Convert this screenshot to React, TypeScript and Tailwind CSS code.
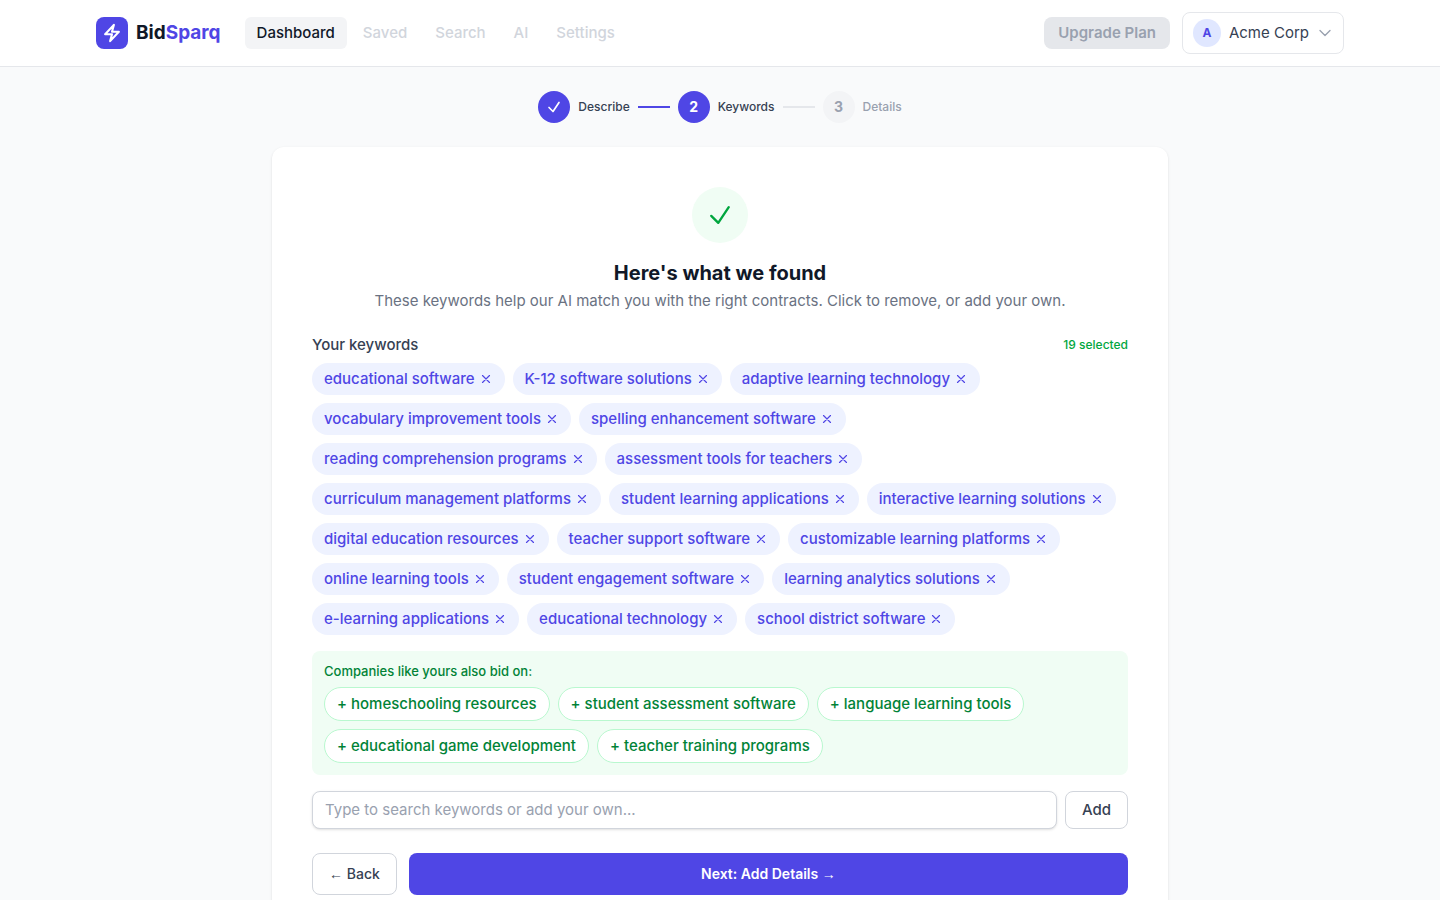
import React from "react";
import {
  HiOutlineBolt,
  HiOutlineCheck,
  HiOutlineChevronDown,
  HiOutlineXMark,
} from "react-icons/hi2";

const navItems = ["Saved", "Search", "AI", "Settings"];

const keywords = [
  "educational software",
  "K-12 software solutions",
  "adaptive learning technology",
  "vocabulary improvement tools",
  "spelling enhancement software",
  "reading comprehension programs",
  "assessment tools for teachers",
  "curriculum management platforms",
  "student learning applications",
  "interactive learning solutions",
  "digital education resources",
  "teacher support software",
  "customizable learning platforms",
  "online learning tools",
  "student engagement software",
  "learning analytics solutions",
  "e-learning applications",
  "educational technology",
  "school district software",
];

const suggestions = [
  "homeschooling resources",
  "student assessment software",
  "language learning tools",
  "educational game development",
  "teacher training programs",
];

const Header = () => {
  return (
    <header className="bg-white border-b border-gray-200">
      <div className="max-w-7xl mx-auto px-4 py-3 flex items-center justify-between">
        <div className="flex items-center gap-6">
          <a href="#" className="flex items-center gap-2">
            <span className="size-8 rounded-lg bg-[#4f46e5] text-white flex items-center justify-center">
              <HiOutlineBolt size={20} className="[stroke-width:2.5]" />
            </span>
            <span className="text-[19px]/7 font-bold text-gray-900">
              Bid<span className="text-[#4f46e5]">Sparq</span>
            </span>
          </a>
          <nav className="flex items-center gap-1">
            <a href="#" className="px-3 py-1.5 rounded-md bg-gray-100 text-[15px]/5 font-medium text-gray-900">
              Dashboard
            </a>
            {navItems.map((item) => (
              <a key={item} href="#" className="px-3 py-1.5 rounded-md text-[15px]/5 font-medium text-gray-300">
                {item}
              </a>
            ))}
          </nav>
        </div>

        <div className="flex items-center gap-3">
          <button type="button" disabled className="px-3.5 py-1.5 rounded-lg bg-gray-200 text-[15px]/5 font-semibold text-gray-400">
            Upgrade Plan
          </button>
          <button type="button" className="flex items-center gap-2 px-2.5 py-1.5 rounded-lg border border-gray-200 bg-white">
            <span className="size-7 rounded-full bg-indigo-100 text-[#4f46e5] text-xs font-bold flex items-center justify-center">
              A
            </span>
            <span className="text-[15px]/5 text-gray-700">Acme Corp</span>
            <HiOutlineChevronDown size={16} className="text-gray-400 [stroke-width:2]" />
          </button>
        </div>
      </div>
    </header>
  );
};

const Steps = () => {
  return (
    <ol className="flex items-center justify-center gap-2 text-xs font-medium">
      <li className="flex items-center gap-2 text-gray-700">
        <span className="size-8 rounded-full bg-[#4f46e5] text-white flex items-center justify-center">
          <HiOutlineCheck size={16} className="[stroke-width:2.5]" />
        </span>
        Describe
        <span className="w-8 h-0.5 bg-[#4f46e5]" />
      </li>
      <li className="flex items-center gap-2 text-gray-700">
        <span className="size-8 rounded-full bg-[#4f46e5] text-white text-sm font-bold flex items-center justify-center">
          2
        </span>
        Keywords
        <span className="w-8 h-0.5 bg-gray-200" />
      </li>
      <li className="flex items-center gap-2 text-gray-400">
        <span className="size-8 rounded-full bg-gray-100 text-sm font-bold flex items-center justify-center">
          3
        </span>
        Details
      </li>
    </ol>
  );
};

const App = () => {
  return (
    <div className="min-h-screen bg-gray-50 font-[Inter,sans-serif]">
      <Header />

      <main className="max-w-4xl mx-auto py-6">
        <Steps />

        <section className="mt-6 p-10 bg-white rounded-xl shadow-sm">
          <div className="text-center">
            <div className="size-14 mx-auto rounded-full bg-green-50 text-green-600 flex items-center justify-center">
              <HiOutlineCheck size={28} className="[stroke-width:2]" />
            </div>
            <h1 className="mt-4 text-xl font-bold text-gray-900">Here's what we found</h1>
            <p className="mt-1 text-[15px]/5 text-gray-500">
              These keywords help our AI match you with the right contracts. Click to remove, or add your own.
            </p>
          </div>

          <div className="mt-6 mb-2 flex items-center justify-between">
            <h2 className="text-[15px]/5 font-medium text-gray-700">Your keywords</h2>
            <span className="text-xs font-medium text-green-600">{keywords.length} selected</span>
          </div>
          <div className="flex flex-wrap gap-2">
            {keywords.map((keyword) => (
              <button
                key={keyword}
                type="button"
                className="flex items-center gap-1 px-3 py-1.5 rounded-full bg-indigo-50 text-[15px]/5 font-medium text-[#4f46e5]"
              >
                {keyword}
                <HiOutlineXMark size={14} className="[stroke-width:2]" />
              </button>
            ))}
          </div>

          <div className="mt-4 p-3 rounded-lg bg-green-50">
            <p className="mb-2 text-[13px]/4 font-medium text-green-700">Companies like yours also bid on:</p>
            <div className="flex flex-wrap gap-2">
              {suggestions.map((item) => (
                <button
                  key={item}
                  type="button"
                  className="px-3 py-1.5 rounded-full border border-green-200 bg-white text-[15px]/5 font-medium text-green-700"
                >
                  + {item}
                </button>
              ))}
            </div>
          </div>

          <form className="mt-4 flex gap-2" onSubmit={(e) => e.preventDefault()}>
            <input
              type="text"
              aria-label="Search keywords"
              placeholder="Type to search keywords or add your own..."
              className="flex-1 min-w-0 px-3 py-2 rounded-lg border border-gray-300 bg-white shadow-sm text-[15px]/5 text-gray-900 placeholder:text-gray-400"
            />
            <button type="submit" className="px-4 py-2 rounded-lg border border-gray-300 bg-white text-[15px]/5 font-medium text-gray-700">
              Add
            </button>
          </form>

          <div className="mt-6 flex gap-3">
            <button type="button" className="px-4 py-2.5 rounded-lg border border-gray-300 bg-white text-sm font-medium text-gray-700">
              <span className="font-['Liberation_Sans',sans-serif]">←</span> Back
            </button>
            <button type="button" className="flex-1 px-4 py-2.5 rounded-lg bg-[#4f46e5] text-sm font-semibold text-white">
              Next: Add Details <span className="font-['Liberation_Sans',sans-serif] font-normal">→</span>
            </button>
          </div>
        </section>
      </main>
    </div>
  );
};

export default App;
